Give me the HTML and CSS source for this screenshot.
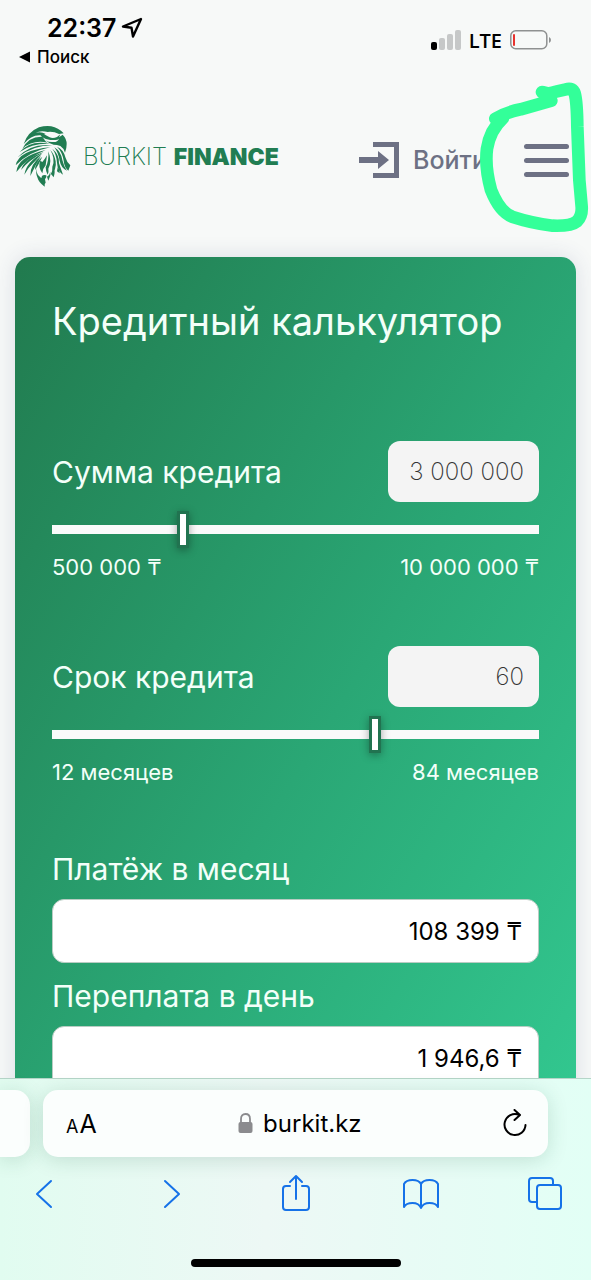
FILE: index.html
```html
<!DOCTYPE html>
<html lang="ru">
<head>
<meta charset="utf-8">
<meta name="viewport" content="width=device-width, initial-scale=1">
<title>Bürkit Finance</title>
<link rel="stylesheet" href="styles.css">
</head>
<body>
<div class="status">
  <div class="status-left">
    <div class="clock">22:37
      <svg width="22" height="22" viewBox="0 0 22 22" fill="none" stroke="#000" stroke-width="2.4" stroke-linejoin="round"><path d="M20 2 2 9.500l8.500 1.200L12 19.500z"/></svg>
    </div>
    <a class="back" href="#"><svg width="12" height="12" viewBox="0 0 12 12"><path d="M0 6 11 0.500v11z"/></svg>Поиск</a>
  </div>
  <div class="status-right">
    <svg width="30" height="20" viewBox="0 0 30 20"><rect y="12" width="6" height="8" rx="2"/><g fill="#c6c8c8"><rect x="8" y="8" width="6" height="12" rx="2"/><rect x="16" y="4" width="6" height="16" rx="2"/><rect x="24" width="6" height="20" rx="2"/></g></svg>
    <span class="network">LTE</span>
    <svg width="42" height="20" viewBox="0 0 42 20"><rect x=".8" y=".8" width="36" height="18" rx="5" fill="none" stroke="#8f9191" stroke-width="1.500"/><rect x="3" y="4" width="2" height="12" rx="1" fill="#e8322d"/><path d="M39 7q2 1 2 3t-2 3z" fill="#8f9191"/></svg>
  </div>
</div>

<header class="header">
  <a class="logo" href="#">
    <svg class="eagle" width="56" height="62" viewBox="46 26 168 184" fill="#217d52">
      <path d="M72 82Q84 46 118 32q38-12 66 10l8 8-14 2q-16-8-34-6-20-6-36 2 18-4 30 4l-12 4q-30-4-54 26z"/>
      <path d="M120 52q8-4 16 2l14 8q10 4 22-1l10-8-4 9 11-8q12 12 12 28 0 14-5 26-4-14-14-20-10-4-20-4-14-2-20-10-12-6-22-22z"/>
      <path fill="#f7f9f8" d="M128 62q12 8 24 8l16 0q6 0 10-4-4 10-16 10-24 2-34-14z"/>
      <path d="M68 96Q88 58 128 60q8 14 16 18-44-10-76 18z"/>
      <path d="M60 106q34-38 92-24-50-4-92 24z"/>
      <path d="M54 122q40-44 104-36-58 0-104 36z"/>
      <path d="M48 146q10-46 104-54-62 12-104 54z"/>
      <path d="M50 166q4-46 88-66-56 24-88 66z"/>
      <path d="M64 160q10-34 68-54-46 26-68 54z"/>
      <path d="M74 174q6-38 54-64-34 30-54 64z"/>
      <path d="M88 152q10-24 38-40-18 20-38 40z"/>
      <path d="M92 178q-2-34 32-60-16 26-32 60z"/>
      <path d="M106 160q0-22 22-40-10 22-22 40z"/>
      <path d="M110 144q-4 26 12 38 4 5 4-2 2-8 14-4 2 6-4 12l2 10q-4 2-3 12-18-12-22-28-6-14-3-38z"/>
      <path d="M122 132q-8 18 6 38 2-16 10-24l4-30q-8 14-14 20z"/>
      <path d="M146 104q2 30-8 48 0 12 6 22 4-8 2-18 12-20 0-52z"/>
      <path d="M152 100q16 26 6 50 2 12-6 26 20-16 16-42-4-22-16-34z"/>
      <path d="M158 96q22 18 20 44l12 34q-16-10-18-36-2-26-14-42z"/>
      <path d="M164 92q20 12 24 38 4 18 14 32-18-8-22-30-4-24-16-40z"/>
      <path d="M172 90q20 8 26 34 4 14 14 22l-6 16q-12-10-14-30-4-26-20-42z"/>
      <path d="M162 154q6 10 0 28l-8-10q6-6 8-18zM152 166q2 14-6 26l-4-12q8-4 10-14zM174 152q8 8 6 18l-8-6z"/>
    </svg>
    <span class="brand">BÜRKIT <b>FINANCE</b></span>
  </a>
  <a class="login" href="#">
    <svg width="40" height="38" viewBox="0 0 40 38" fill="#6d7184"><path d="M14 1h26v36H14v-5h21V6H14zM0 16h19v-6l11 9-11 9v-6H0z"/></svg>
    Войти
  </a>
  <button class="menu" aria-label="Меню"><i></i><i></i><i></i></button>
  <svg class="marker" width="119" height="160" viewBox="396 0 357 480" fill="none" stroke="#33ff99" stroke-width="38" stroke-linecap="round" stroke-linejoin="round"><path d="M606 36q20 8 42-1l30-7q20-6 26 12 7 24 8 100l6 160 7 80q2 28-14 44-18 15-73 13-64-8-122-27-38-16-63-80-19-70-12-124 9-56 48-92M466 116q35-20 76-28l92-26"/></svg>
</header>

<main class="page">
  <form class="card">
    <h1 class="title">Кредитный калькулятор</h1>
    <section class="field">
      <div class="field-head"><label for="sum">Сумма кредита</label><input class="amount" id="sum" type="text" value="3 000 000"></div>
      <input class="range" type="range" min="500000" max="10000000" step="100000" value="3000000" aria-label="Сумма кредита">
      <div class="limits"><span>500 000 ₸</span><span>10 000 000 ₸</span></div>
    </section>
    <section class="field">
      <div class="field-head"><label for="term">Срок кредита</label><input class="amount" id="term" type="text" value="60"></div>
      <input class="range" type="range" min="12" max="84" value="60" aria-label="Срок кредита">
      <div class="limits"><span>12 месяцев</span><span>84 месяцев</span></div>
    </section>
    <section class="results">
      <label for="monthly">Платёж в месяц</label>
      <input class="result" id="monthly" type="text" readonly value="108 399 ₸">
      <label for="daily">Переплата в день</label>
      <input class="result" id="daily" type="text" readonly value="1 946,6 ₸">
    </section>
  </form>
</main>

<footer class="browser">
  <div class="tabs">
    <div class="previous-tab"></div>
    <div class="address">
      <button class="text-size" aria-label="Размер текста"><small>A</small>A</button>
      <div class="host"><svg width="15" height="21" viewBox="0 0 15 21"><path d="M3 10V6q0-5 4.500-5T12 6v4" fill="none" stroke="#8b8b8e" stroke-width="1.800"/><rect x=".5" y="9" width="14" height="11" rx="2" fill="#8b8b8e"/></svg>burkit.kz</div>
      <button aria-label="Обновить"><svg width="24" height="30" viewBox="0 0 24 30" fill="none" stroke="#000" stroke-width="2" stroke-linecap="round" stroke-linejoin="round"><path d="M16 5.800A10.500 10.500 0 1 0 22.500 16M11.500 1l5.500 5-5.500 5"/></svg></button>
    </div>
  </div>
  <nav class="toolbar">
    <button aria-label="Назад"><svg width="36" height="40" viewBox="0 0 36 40"><path d="M24 8 10 21l14 13"/></svg></button>
    <button aria-label="Вперёд"><svg width="36" height="40" viewBox="0 0 36 40"><path d="M13 8l14 13-14 13"/></svg></button>
    <button aria-label="Поделиться"><svg width="36" height="40" viewBox="0 0 36 40"><path d="M12 13H8q-3 0-3 3v18q0 3 3 3h20q3 0 3-3V16q0-3-3-3h-4M18 26V3M12 9l6-6 6 6"/></svg></button>
    <button aria-label="Закладки"><svg width="36" height="40" viewBox="0 0 36 40"><path d="M18 11q-2-4-8.500-4T1 11v23q2-4 8.500-4t8.500 5q2-5 8.500-5t8.500 4V11q-2-4-8.500-4T18 11zv24"/></svg></button>
    <button aria-label="Вкладки"><svg width="36" height="40" viewBox="0 0 36 40"><rect x="9" y="12" width="24" height="24" rx="3"/><path d="M9 29H4q-3 0-3-3V8q0-3 3-3h18q3 0 3 3v4"/></svg></button>
  </nav>
  <div class="home"></div>
</footer>
</body>
</html>
```
FILE: styles.css
```css
* { box-sizing: border-box; }
body {
  margin: 0;
  height: 100vh;
  display: flex;
  flex-direction: column;
  overflow: hidden;
  background: #f7f9f8;
  color: #000;
  font-family: Inter, "Noto Sans", sans-serif;
}
button { border: 0; padding: 0; background: none; color: inherit; font: inherit; display: flex; }
a { color: inherit; text-decoration: none; }
svg { display: block; flex: none; }

.status { display: flex; justify-content: space-between; padding: 12px 39px 0 19px; height: 76px; }
.clock { display: flex; align-items: center; gap: 5px; margin-left: 28px; font-size: 25px; line-height: 32px; font-weight: 600; }
.back { display: flex; align-items: center; gap: 6px; font-size: 17px; line-height: 26px; font-weight: 500; }
.status-right { display: flex; align-items: center; gap: 8px; height: 56px; }
.network { font-family: "Open Sans", sans-serif; font-size: 20px; font-weight: 600; }

.header { position: relative; display: flex; align-items: center; padding: 20px 22px 0 15px; height: 148px; }
.logo { display: flex; align-items: center; gap: 12px; margin-bottom: 8px; color: #217d52; }
.brand { font-size: 24px; font-weight: 200; white-space: nowrap; }
.brand b { font-size: 23px; font-weight: 900; }
.login { display: flex; align-items: center; gap: 14px; margin-left: auto; color: #6d7184; font-size: 25px; font-weight: 500; }
.menu { flex-direction: column; gap: 9px; margin-left: 37px; }
.menu i { width: 45px; height: 5px; border-radius: 3px; background: #6d7184; }
.marker { position: absolute; right: 0; top: 4px; pointer-events: none; }

.page { flex: 1; min-height: 0; padding: 33px 15px 0; overflow: hidden; }
.card {
  min-height: 1120px;
  padding: 41px 37px;
  border-radius: 15px;
  background: linear-gradient(122deg, #217a4e 0%, #2aa775 48%, #35d399 100%);
  box-shadow: 0 0 22px rgba(50, 60, 110, .14);
  color: #f3fff9;
}
.title { margin: 0 0 96px; font-size: 38px; line-height: 47px; font-weight: 400; white-space: nowrap; }
.field + .field { margin-top: 64px; }
.field-head { display: flex; align-items: center; justify-content: space-between; font-size: 30px; }
.amount { width: 151px; height: 61px; padding: 0 15px; border: 0; border-radius: 12px; background: #f4f4f4; color: #333; font: 200 24px Inter, sans-serif; text-align: right; }
.range { appearance: none; display: block; width: 100%; height: 37px; margin: 9px 0 4px; background: linear-gradient(#fafafa, #fafafa) center / 100% 9px no-repeat; }
.range::-webkit-slider-thumb { appearance: none; width: 12px; height: 37px; border: 3px solid #217350; background: #fff; box-shadow: 0 2px 8px rgba(0, 0, 0, .35); }
.limits { display: flex; justify-content: space-between; font-size: 22px; line-height: 30px; }
.results { display: flex; flex-direction: column; margin-top: 58px; }
.results label { font-size: 30px; line-height: 48px; }
.result { width: 100%; height: 64px; margin: 6px 0 9px; padding: 0 16px; border: 1px solid #b9ccc3; border-radius: 12px; background: #fff; color: #000; font: 400 24px Inter, sans-serif; text-align: right; }

.browser { position: relative; border-top: 1px solid #b5d5c8; background: linear-gradient(90deg, #e1fcf0, #edf8f5 45%, #e2fff5); padding: 11px 0 13px; }
.tabs { display: flex; gap: 13px; padding-right: 43px; }
.previous-tab, .address { height: 67px; background: #fbfefd; box-shadow: 0 3px 20px rgba(20, 90, 60, .17); }
.previous-tab { width: 30px; border-radius: 0 15px 15px 0; }
.address { flex: 1; display: flex; align-items: center; justify-content: space-between; padding: 0 21px 0 23px; border-radius: 15px; }
.text-size { align-items: baseline; gap: 1px; font-size: 25px; }
.text-size small { font-size: 18px; }
.host { display: flex; align-items: center; gap: 10px; font-size: 24px; }
.toolbar { display: flex; justify-content: space-between; padding: 16px 27px 0; }
.toolbar svg { fill: none; stroke: #1672e8; stroke-width: 2; stroke-linecap: round; stroke-linejoin: round; }
.home { width: 210px; height: 8px; margin: 46px auto 0; border-radius: 4px; background: #000; }
```
